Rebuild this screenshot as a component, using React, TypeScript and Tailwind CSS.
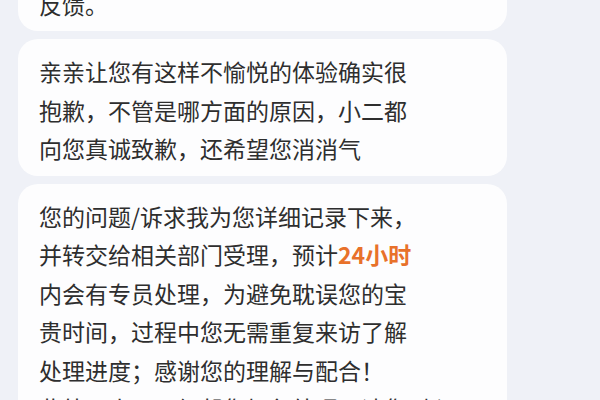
const bubbles: React.ReactNode[][] = [
  [
    '如有其他问题，欢迎随时联系小二进行',
    '反馈。',
  ],
  [
    '亲亲让您有这样不愉悦的体验确实很',
    '抱歉，不管是哪方面的原因，小二都',
    '向您真诚致歉，还希望您消消气',
  ],
  [
    '您的问题/诉求我为您详细记录下来，',
    <>
      并转交给相关部门受理，预计
      <span className="font-semibold text-[#e8712a]">24小时</span>
    </>,
    '内会有专员处理，为避免耽误您的宝',
    '贵时间，过程中您无需重复来访了解',
    '处理进度；感谢您的理解与配合！',
    '此外，小二已经帮您加急处理，请您耐心',
  ],
]

export default function App() {
  return (
    <div
      className="h-[400px] w-[600px] overflow-hidden bg-[#eff1f7]"
      style={{ fontFamily: '"Noto Sans CJK SC", "Noto Sans", sans-serif' }}
    >
      <div className="flex flex-col gap-2 pl-[18px] -mt-[67px]">
        {bubbles.map((lines, i) => (
          <div
            key={i}
            className="w-[489px] rounded-[20px] bg-[#fdfdfe] pl-[21px] pt-[13px] pb-[8px] text-[23px] leading-[38.5px] text-[#2e2e2e]"
          >
            {lines.map((line, j) => (
              <div key={j} className="whitespace-nowrap">
                {line}
              </div>
            ))}
          </div>
        ))}
      </div>
    </div>
  )
}
